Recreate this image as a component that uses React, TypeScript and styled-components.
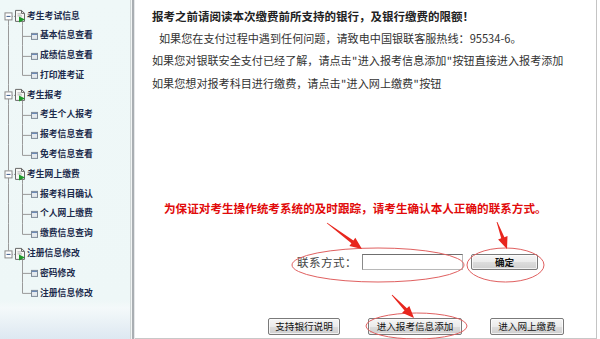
import React from 'react';
import styled, { createGlobalStyle } from 'styled-components';

const GlobalStyle = createGlobalStyle`
  html, body { margin: 0; padding: 0; background: #fff; }
  body { font-family: "Noto Sans CJK SC", "Liberation Sans", sans-serif; }
  #root { width: 600px; height: 339px; }
`;

const Page = styled.div`
  width: 600px;
  height: 339px;
  display: flex;
  overflow: hidden;
  background: #fff;
`;

const Sidebar = styled.nav`
  width: 130px;
  flex: none;
  box-sizing: border-box;
  padding-top: 6px;
  background: linear-gradient(
    to bottom,
    #eff8f8 0px,
    #eef7f7 300px,
    #f4f9fa 308px,
    #dde8f1 339px
  );
`;

const Divider = styled.div`
  width: 5px;
  flex: none;
  background: linear-gradient(
    to right,
    #cfd6d6 0px,
    #cfd6d6 1px,
    #f2f5f5 1px,
    #f2f5f5 2px,
    #a9aeb2 2px,
    #a9aeb2 4px,
    #e6e8ea 4px
  );
`;

const TreeRow = styled.div`
  display: flex;
  align-items: center;
  height: 19.8px;
  font-size: 8.8px;
  font-weight: bold;
  color: #1c2b4c;
  white-space: nowrap;
`;

const Label = styled.span<{ $gap: number }>`
  margin-left: ${(p) => p.$gap}px;
  line-height: 1;
`;

const Main = styled.main`
  flex: 1;
  position: relative;
  display: flex;
  flex-direction: column;
  box-sizing: border-box;
  height: 339px;
  margin-right: 3px;
  padding: 5px 0 0 17px;
  border-right: 1px solid #c4c4c4;
  border-bottom: 1px solid #c8c8c8;
`;

const Heading = styled.p`
  margin: 0;
  height: 22px;
  line-height: 22px;
  font-size: 11.5px;
  font-weight: bold;
  color: #222;
  white-space: nowrap;
`;

const Para = styled.p<{ $indent?: number; $top?: number }>`
  margin: ${(p) => p.$top ?? 0}px 0 0 0;
  padding-left: ${(p) => p.$indent ?? 0}px;
  height: 22px;
  line-height: 22px;
  font-size: 11.1px;
  color: #333;
  white-space: nowrap;
`;

const Quote = styled.span`
  display: inline-block;
  width: 6px;
  text-align: center;
`;

const Notice = styled.p`
  margin: 104px 0 0 0;
  padding-left: 12px;
  height: 20px;
  line-height: 20px;
  font-size: 11.6px;
  font-weight: bold;
  color: #e10a0a;
  white-space: nowrap;
`;

const ContactRow = styled.div`
  display: flex;
  align-items: center;
  height: 18px;
  margin-top: 35px;
  padding-left: 145px;
`;

const ContactLabel = styled.label`
  font-size: 11.6px;
  color: #444;
  letter-spacing: 0.4px;
  margin-right: 5px;
`;

const TextInput = styled.input`
  box-sizing: border-box;
  width: 101px;
  height: 16px;
  margin: 0;
  padding: 0 2px;
  border: 1px solid #b8b8b8;
  border-top-color: #6f6f6f;
  border-left-color: #8a8a8a;
  background: #fff;
  outline: none;
`;

const Button = styled.button<{ $w: number; $bold?: boolean }>`
  box-sizing: border-box;
  width: ${(p) => p.$w}px;
  height: 17px;
  margin: 0;
  padding: 0;
  font-family: inherit;
  font-size: 9.6px;
  font-weight: ${(p) => (p.$bold ? 'bold' : 'normal')};
  line-height: 15px;
  color: #111;
  border: 1px solid #7a7a7a;
  border-radius: 2px;
  background: linear-gradient(#f6f6f6 0%, #ebebeb 50%, #dddddd 51%, #cfcfcf 100%);
  box-shadow: inset 0 0 0 1px rgba(255, 255, 255, 0.7);
`;

const ConfirmButton = styled(Button)`
  margin-left: 8px;
  height: 16px;
`;

const ButtonRow = styled.div`
  display: flex;
  align-items: center;
  gap: 28px;
  margin-top: 47px;
  padding-left: 116px;
`;

const Annotations = styled.svg`
  position: absolute;
  left: 0;
  top: 0;
  width: 100%;
  height: 100%;
  pointer-events: none;
  overflow: visible;
`;

type Group = { label: string; children: string[] };

const tree: Group[] = [
  { label: '考生考试信息', children: ['基本信息查看', '成绩信息查看', '打印准考证'] },
  { label: '考生报考', children: ['考生个人报考', '报考信息查看', '免考信息查看'] },
  { label: '考生网上缴费', children: ['报考科目确认', '个人网上缴费', '缴费信息查询'] },
  { label: '注册信息修改', children: ['密码修改', '注册信息修改'] },
];

const H = 19.8;
const C = H / 2;
const LINE = '#9a9a9a';

function GroupGutter({ first, last }: { first: boolean; last: boolean }) {
  return (
    <svg width={27} height={H} style={{ flex: 'none', display: 'block' }}>
      {!first && <line x1={8.5} y1={0} x2={8.5} y2={C - 3.5} stroke={LINE} />}
      {!last && <line x1={8.5} y1={C + 3.5} x2={8.5} y2={H} stroke={LINE} />}
      <rect x={5} y={C - 3} width={7} height={7} fill="#fff" stroke="#8a8a8a" />
      <line x1={6.5} y1={C + 0.5} x2={10.5} y2={C + 0.5} stroke="#3a5a8a" />
      <line x1={12} y1={C + 0.5} x2={15} y2={C + 0.5} stroke={LINE} strokeDasharray="1 1" />
      <path d={`M15.5 ${C - 5.5} h6 l3 3 v8 h-9 z`} fill="#f7f7f4" stroke="#6a6a6a" />
      <path d={`M21.5 ${C - 5.5} v3 h3`} fill="none" stroke="#6a6a6a" />
      <line x1={17.5} y1={C - 2} x2={21} y2={C - 2} stroke="#b0b0b0" />
      <line x1={17.5} y1={C} x2={22} y2={C} stroke="#b0b0b0" />
      <path d={`M19 ${C + 0.5} L25 ${C + 3.5} L19 ${C + 6.5} z`} fill="#1f9a2a" />
      <line x1={22.5} y1={C + 6} x2={22.5} y2={H} stroke={LINE} />
    </svg>
  );
}

function ChildGutter({ parentLast, last }: { parentLast: boolean; last: boolean }) {
  return (
    <svg width={39} height={H} style={{ flex: 'none', display: 'block' }}>
      {!parentLast && <line x1={8.5} y1={0} x2={8.5} y2={H} stroke={LINE} />}
      <line x1={22.5} y1={0} x2={22.5} y2={last ? C + 0.5 : H} stroke={LINE} />
      <line x1={22.5} y1={C + 0.5} x2={31} y2={C + 0.5} stroke={LINE} />
      <rect x={31.5} y={C - 2.5} width={6} height={6} fill="#e4e9ee" stroke="#7f8b98" />
      <line x1={32} y1={C - 1.5} x2={37} y2={C - 1.5} stroke="#5d7fb0" />
    </svg>
  );
}

function arrowPoints(tx: number, ty: number, px: number, py: number) {
  const dx = px - tx;
  const dy = py - ty;
  const L = Math.hypot(dx, dy);
  const ux = dx / L;
  const uy = dy / L;
  const nx = -uy;
  const ny = ux;
  const headLen = 12;
  const headW = 5;
  const shaftW = 1.7;
  const tailW = 0.4;
  const bx = px - ux * headLen;
  const by = py - uy * headLen;
  const pts: [number, number][] = [
    [tx + nx * tailW, ty + ny * tailW],
    [bx + nx * shaftW, by + ny * shaftW],
    [bx + nx * headW, by + ny * headW],
    [px, py],
    [bx - nx * headW, by - ny * headW],
    [bx - nx * shaftW, by - ny * shaftW],
    [tx - nx * tailW, ty - ny * tailW],
  ];
  return pts.map(([x, y]) => `${x.toFixed(1)},${y.toFixed(1)}`).join(' ');
}

function Arrow({ from, to }: { from: [number, number]; to: [number, number] }) {
  return <polygon points={arrowPoints(from[0], from[1], to[0], to[1])} fill="#e8261e" />;
}

export default function App() {
  return (
    <>
      <GlobalStyle />
      <Page>
        <Sidebar>
          {tree.map((g, gi) => {
            const lastGroup = gi === tree.length - 1;
            return (
              <React.Fragment key={gi}>
                <TreeRow>
                  <GroupGutter first={gi === 0} last={lastGroup} />
                  <Label $gap={0}>{g.label}</Label>
                </TreeRow>
                {g.children.map((c, ci) => (
                  <TreeRow key={ci}>
                    <ChildGutter parentLast={lastGroup} last={ci === g.children.length - 1} />
                    <Label $gap={1}>{c}</Label>
                  </TreeRow>
                ))}
              </React.Fragment>
            );
          })}
        </Sidebar>
        <Divider />
        <Main>
          <Heading>报考之前请阅读本次缴费前所支持的银行，及银行缴费的限额！</Heading>
          <Para $indent={7}>如果您在支付过程中遇到任何问题，请致电中国银联客服热线：95534-6。</Para>
          <Para>
            如果您对银联安全支付已经了解，请点击<Quote>"</Quote>进入报考信息添加<Quote>"</Quote>按钮直接进入报考添加
          </Para>
          <Para $top={1}>
            如果您想对报考科目进行缴费，请点击<Quote>"</Quote>进入网上缴费<Quote>"</Quote>按钮
          </Para>
          <Notice>为保证对考生操作统考系统的及时跟踪，请考生确认本人正确的联系方式。</Notice>
          <ContactRow>
            <ContactLabel>联系方式：</ContactLabel>
            <TextInput type="text" />
            <ConfirmButton $w={67} $bold>确定</ConfirmButton>
          </ContactRow>
          <ButtonRow>
            <Button $w={72}>支持银行说明</Button>
            <Button $w={94}>进入报考信息添加</Button>
            <Button $w={74}>进入网上缴费</Button>
          </ButtonRow>
          <Annotations>
            <ellipse cx={243} cy={265} rx={86} ry={17} fill="none" stroke="#e06060" strokeWidth={1} />
            <ellipse cx={370.5} cy={265} rx={38.5} ry={17} fill="none" stroke="#e06060" strokeWidth={1} />
            <ellipse cx={281.5} cy={326} rx={50.5} ry={13} fill="none" stroke="#e06060" strokeWidth={1} />
            <Arrow from={[192, 223]} to={[227, 249]} />
            <Arrow from={[362, 222]} to={[372, 249]} />
            <Arrow from={[257, 295]} to={[279, 318]} />
          </Annotations>
        </Main>
      </Page>
    </>
  );
}
